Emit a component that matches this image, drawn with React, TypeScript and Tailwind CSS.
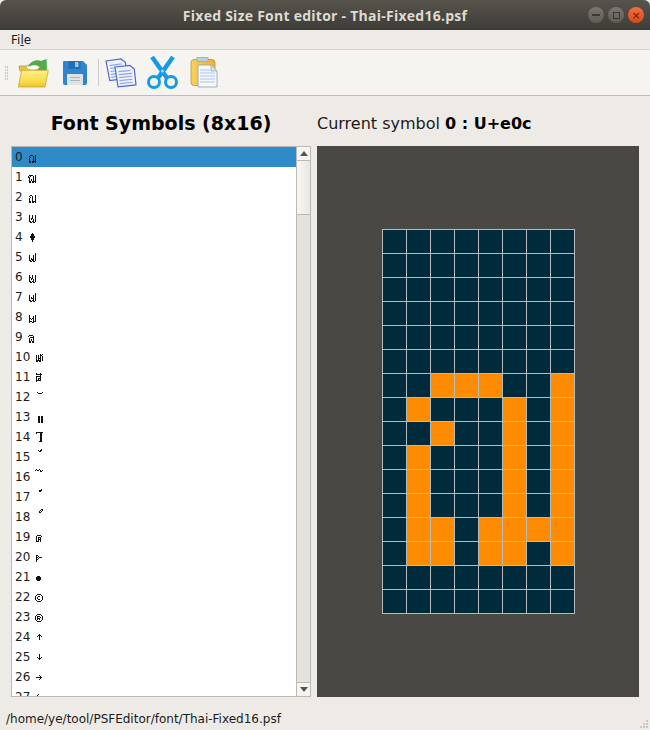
import React from 'react';

// bitmap previews of the font symbols: top row + pixel rows (8 wide)
const symbols: { t: number; r: string[] }[] = [
  { t: 6, r: ['..###..#', '.#...#.#', '..#..#.#', '.#...#.#', '.#...#.#', '.#...#.#', '.##.####', '.##.##.#'] },
  { t: 6, r: ['.####..#', '#.#..#.#', '##...#.#', '.#...#.#', '.#.#.#.#', '.#.#.#.#', '.##.####', '.##.##.#'] },
  { t: 6, r: ['..##...#', '.#..#..#', '..#.#..#', '.#..#..#', '.#..#..#', '.#..#..#', '.##.####', '.##.##.#'] },
  { t: 6, r: ['.#..#..#', '.#..#..#', '.#..#..#', '.#.##..#', '.#.#.#.#', '.#...#.#', '.##.##.#', '..##.##.'] },
  { t: 4, r: ['....#...', '...###..', '...###..', '..#####.', '..#####.', '...###..', '...###..', '....#...', '....#...'] },
  { t: 4, r: ['.......#', '.......#', '.#...#.#', '.#...#.#', '.#...#.#', '.#.#.#.#', '.#.###.#', '.##.##.#', '..##.##.'] },
  { t: 6, r: ['.#..#..#', '.#..#..#', '.##.#..#', '.#.##..#', '.#.#.#.#', '.#...#.#', '.##.##.#', '..##.##.'] },
  { t: 4, r: ['.......#', '.......#', '.#...#.#', '.#...#.#', '.#.#.#.#', '.#.###.#', '.#...#.#', '.##.##.#', '..##.##.'] },
  { t: 6, r: ['.#.....#', '.#...#.#', '.#...#.#', '.##.##.#', '.#.#.#.#', '.#...#.#', '.###.###', '.#..##..'] },
  { t: 6, r: ['.####...', '#....#..', '..####..', '.#...#..', '.#.#.#..', '.#.#.#..', '.##.##..', '.##.##..'] },
  { t: 5, r: ['.....#.#', '.#.#.##.', '.#.#.#.#', '.#.#.#.#', '.#.###.#', '.#.#.#.#', '.#####.#', '.##.##..'] },
  { t: 4, r: ['.#...#..', '.######.', '.....#..', '.#####..', '.#...#..', '.#.###..', '.#.#.#..', '.#####..', '.#......'] },
  { t: 3, r: ['..#....#', '...####.'] },
  { t: 6, r: ['........', '...##.##', '...##.##', '...##.##', '...##.##', '...##.##', '...##.##', '...##.##'] },
  { t: 3, r: ['.#######', '.#...##.', '.....##.', '.....##.', '.....##.', '.....##.', '.....##.', '.....##.', '.....##.', '....###.'] },
  { t: 0, r: ['......#.', '...#.##.', '....##..'] },
  { t: 0, r: ['.#..#...', '#.##.#.#', '.....##.'] },
  { t: 0, r: ['......#.', '....###.', '....##..'] },
  { t: 0, r: ['......##', '.....#.#', '....#.#.', '....##..'] },
  { t: 6, r: ['..####..', '.#....#.', '.#.###..', '.#.#.#..', '.#.###..', '.#.#.#..', '.###.#..'] },
  { t: 6, r: ['.##.....', '.#.#....', '.##.###.', '.#.#....', '.##.....', '.#......', '.#......'] },
  { t: 7, r: ['..###...', '.#####..', '.#####..', '.#####..', '..###...'] },
  { t: 5, r: ['..####..', '.#....#.', '#..##..#', '#.#....#', '#.#....#', '#..##..#', '.#....#.', '..####..'] },
  { t: 5, r: ['..####..', '.#....#.', '#.###..#', '#.#..#.#', '#.###..#', '#.#.#..#', '.#....#.', '..####..'] },
  { t: 5, r: ['....#...', '...###..', '..#.#.#.', '....#...', '....#...', '....#...'] },
  { t: 5, r: ['....#...', '....#...', '....#...', '..#.#.#.', '...###..', '....#...'] },
  { t: 6, r: ['....#...', '.....#..', '.######.', '.....#..', '....#...'] },
  { t: 5, r: ['...#....', '..#.....'] },
];

const Preview = ({ t, r }: { t: number; r: string[] }) => (
  <svg width="8" height="16" viewBox="0 0 8 16" shapeRendering="crispEdges" className="shrink-0">
    {r.flatMap((row, y) =>
      row.split('').map((c, x) => (c === '#' ? <rect key={`${x}-${y}`} x={x} y={t + y} width="1" height="1" fill="#111" /> : null)),
    )}
  </svg>
);

const bitmap = [
  '........', '........', '........', '........', '........', '........',
  '..###..#', '.#...#.#', '..#..#.#', '.#...#.#', '.#...#.#', '.#...#.#', '.##.####', '.##.##.#',
  '........', '........',
];

const TitleButton = ({ close, children }: { close?: boolean; children: React.ReactNode }) => (
  <div
    className={`w-[16px] h-[16px] rounded-full flex items-center justify-center ${
      close ? 'bg-gradient-to-b from-[#f0703c] to-[#d9481c]' : 'bg-gradient-to-b from-[#7a7770] to-[#5e5b55]'
    }`}
  >
    {children}
  </div>
);

const OpenIcon = () => (
  <svg width="31" height="30" viewBox="0 0 31 30" className="shrink-0">
    <defs>
      <linearGradient id="fold" x1="0" y1="0" x2="0" y2="1">
        <stop offset="0" stopColor="#fdf08a" />
        <stop offset="0.7" stopColor="#f7dc46" />
        <stop offset="1" stopColor="#eebf2c" />
      </linearGradient>
    </defs>
    <path d="M1 8h7l2-1h18v6H2z" fill="#e8c04a" stroke="#b89a3a" strokeWidth="0.8" />
    <ellipse cx="15" cy="9" rx="6" ry="2.500" fill="#fff" />
    <path d="M10 9C12 3 19 1 23 3l5.700-2v12H19l3-4C18 6.500 14 7 10 9z" fill="#4fae4b" />
    <path d="M3.700 12.300H30.300L27 29H0.300z" fill="url(#fold)" stroke="#c9a73c" strokeWidth="0.8" />
  </svg>
);

const SaveIcon = () => (
  <svg width="26" height="26" viewBox="0 0 26 26" className="shrink-0">
    <path d="M2 1h19l4 4v18a2 2 0 0 1-2 2H3a2 2 0 0 1-2-2V2a1 1 0 0 1 1-1z" fill="#2e84cf" />
    <rect x="6.500" y="1" width="12" height="8" fill="#1f6fb5" />
    <rect x="13" y="2" width="3.500" height="5" fill="#9fc6e6" />
    <rect x="5" y="14" width="16" height="11" rx="1" fill="#dfe3e6" />
    <rect x="8" y="17" width="10" height="1" fill="#a9b2b8" />
    <rect x="8" y="20" width="10" height="1" fill="#a9b2b8" />
  </svg>
);

const Sheet = ({ x, y, rot }: { x: number; y: number; rot: number }) => (
  <g transform={`translate(${x} ${y}) rotate(${rot})`}>
    <path d="M0 0h15l4 4v16H1z" fill="#eef2fd" stroke="#4f67cf" strokeWidth="1.200" />
    <path d="M3 5h12M3 8h13M3 11h13M3 14h13M3 17h13" stroke="#8ea4e4" strokeWidth="1.200" />
  </g>
);

const CopyIcon = () => (
  <svg width="32" height="32" viewBox="0 0 32 32" className="shrink-0">
    <Sheet x={1} y={4} rot={-8} />
    <Sheet x={10} y={10} rot={-6} />
  </svg>
);

const CutIcon = () => (
  <svg width="33" height="33" viewBox="0 0 33 33" className="shrink-0">
    <path d="M6 1l15 21M27 1L12 22" stroke="#149ae6" strokeWidth="4.500" fill="none" />
    <circle cx="8" cy="26" r="5.500" fill="none" stroke="#149ae6" strokeWidth="3" />
    <circle cx="25" cy="26" r="5.500" fill="none" stroke="#149ae6" strokeWidth="3" />
    <circle cx="16.500" cy="15" r="1.500" fill="#a9d6ef" />
  </svg>
);

const PasteIcon = () => (
  <svg width="29" height="31" viewBox="0 0 29 31" className="shrink-0">
    <defs>
      <linearGradient id="clip" x1="0" y1="0" x2="1" y2="0">
        <stop offset="0" stopColor="#f6d25c" />
        <stop offset="1" stopColor="#eeaf34" />
      </linearGradient>
    </defs>
    <rect x="1" y="2.500" width="24" height="26" rx="3" fill="url(#clip)" stroke="#b8953f" strokeWidth="0.8" />
    <rect x="7" y="0.500" width="11" height="4" fill="#bcd0e0" stroke="#8aa4bc" strokeWidth="0.7" />
    <path d="M8 8h13l6 6v16H8z" fill="#f4f7fb" stroke="#8f9fb4" strokeWidth="0.8" />
    <path d="M10 13h10M10 16h15M10 19h15M10 22h15M10 25h15" stroke="#a9c8e8" strokeWidth="1.200" />
    <path d="M21 8v6h6" fill="#d4deea" stroke="#8f9fb4" strokeWidth="0.7" />
  </svg>
);

const ScrollArrow = ({ down }: { down?: boolean }) => (
  <svg width="8" height="5" viewBox="0 0 8 5">
    <polygon points={down ? '0,0 8,0 4,5' : '4,0 8,5 0,5'} fill="#555" />
  </svg>
);

const App: React.FC = () => {
  return (
    <div className="w-[650px] h-[730px] flex flex-col bg-[#eeebe7] overflow-hidden text-[#1a1a1a] font-['DejaVu_Sans',sans-serif]">
      {/* Barra de título */}
      <div className="relative h-[30px] shrink-0 flex items-center justify-center rounded-t-[6px] bg-gradient-to-b from-[#57544c] to-[#3d3c37]">
        <span className="text-[14px] font-bold tracking-[0.25px] text-[#dfdbd2] font-['Open_Sans',sans-serif]">
          Fixed Size Font editor - Thai-Fixed16.psf
        </span>
        <div className="absolute right-[6px] top-[7px] flex gap-[4px]">
          <TitleButton>
            <div className="w-[8px] h-[1.500px] bg-[#3a3935]" />
          </TitleButton>
          <TitleButton>
            <div className="w-[7px] h-[7px] border border-[#3a3935]" />
          </TitleButton>
          <TitleButton close>
            <span className="text-[11px] leading-none text-[#5a2410]">×</span>
          </TitleButton>
        </div>
      </div>

      {/* Menu */}
      <div className="h-[20px] shrink-0 flex items-center pl-[11px] text-[12px] border-b border-[#d6d3cf]">
        <span>
          Fi<span className="underline">l</span>e
        </span>
      </div>

      {/* Toolbar */}
      <div className="h-[46px] shrink-0 flex items-center pl-[5px] bg-[#f6f4f0] border-b border-[#bfbcb8]">
        <div className="grid grid-cols-2 gap-[1px] w-[3px] mr-[10px]">
          {Array.from({ length: 10 }).map((_, i) => (
            <div key={i} className="w-[1px] h-[2px] bg-[#c9c6c2]" />
          ))}
        </div>
        <OpenIcon />
        <div className="ml-[13px]">
          <SaveIcon />
        </div>
        <div className="ml-[10px] mr-[6px] w-px h-[27px] bg-[#d0cdc9]" />
        <CopyIcon />
        <div className="ml-[9px]">
          <CutIcon />
        </div>
        <div className="ml-[11px]">
          <PasteIcon />
        </div>
      </div>

      {/* Conteúdo */}
      <div className="flex-1 min-h-0 flex flex-col px-[11px]">
        <div className="h-[50px] shrink-0 flex items-center pt-[4px]">
          <h1 className="w-[300px] text-center text-[19px] font-bold text-black">Font Symbols (8x16)</h1>
          <div className="ml-[6px] pt-[1px] text-[16px]">
            Current symbol <span className="font-bold text-black">0 : U+e0c</span>
          </div>
        </div>

        <div className="h-[551px] flex gap-[6px]">
          {/* Lista */}
          <div className="w-[300px] flex border border-[#bcb9b5] bg-white">
            <div className="flex-1 min-w-0 overflow-hidden">
              {symbols.map((s, i) => (
                <div
                  key={i}
                  className={`h-[20px] shrink-0 flex items-center gap-[5px] pl-[3px] text-[12px] ${i === 0 ? 'bg-[#2e8bc8]' : ''}`}
                >
                  <span>{i}</span>
                  <Preview t={s.t} r={s.r} />
                </div>
              ))}
            </div>
            {/* Barra de rolagem */}
            <div className="w-[14px] flex flex-col border-l border-[#bcb9b5] bg-[#e3e2de]">
              <div className="h-[14px] flex items-center justify-center bg-[#f6f4f0] border-b border-[#bcb9b5]">
                <ScrollArrow />
              </div>
              <div className="h-[54px] bg-gradient-to-r from-[#f8f6f3] to-[#e9e7e3] border-b border-[#bcb9b5]" />
              <div className="flex-1" />
              <div className="h-[14px] flex items-center justify-center bg-[#f6f4f0] border-t border-[#bcb9b5]">
                <ScrollArrow down />
              </div>
            </div>
          </div>

          {/* Editor */}
          <div className="w-[322px] bg-[#4a4842] flex items-center justify-center">
            <div className="grid grid-cols-[repeat(8,23px)] grid-rows-[repeat(16,23px)] gap-px p-px bg-[#b6bbbd]">
              {bitmap.flatMap((row, y) =>
                row
                  .split('')
                  .map((c, x) => <div key={`${x}-${y}`} className={c === '#' ? 'bg-[#ff8c00]' : 'bg-[#002b3b]'} />),
              )}
            </div>
          </div>
        </div>
      </div>

      {/* Status */}
      <div className="relative h-[23px] shrink-0 flex items-center pl-[6px] text-[12px] text-[#1a1a1a]">
        /home/ye/tool/PSFEditor/font/Thai-Fixed16.psf
        <div className="absolute right-[2px] bottom-[2px] grid grid-cols-3 gap-[1px]">
          {[0, 0, 1, 0, 1, 1, 1, 1, 1].map((on, i) => (
            <div key={i} className={`w-[2px] h-[2px] ${on ? 'bg-[#c9c6c2]' : ''}`} />
          ))}
        </div>
      </div>
    </div>
  );
};

export default App;
